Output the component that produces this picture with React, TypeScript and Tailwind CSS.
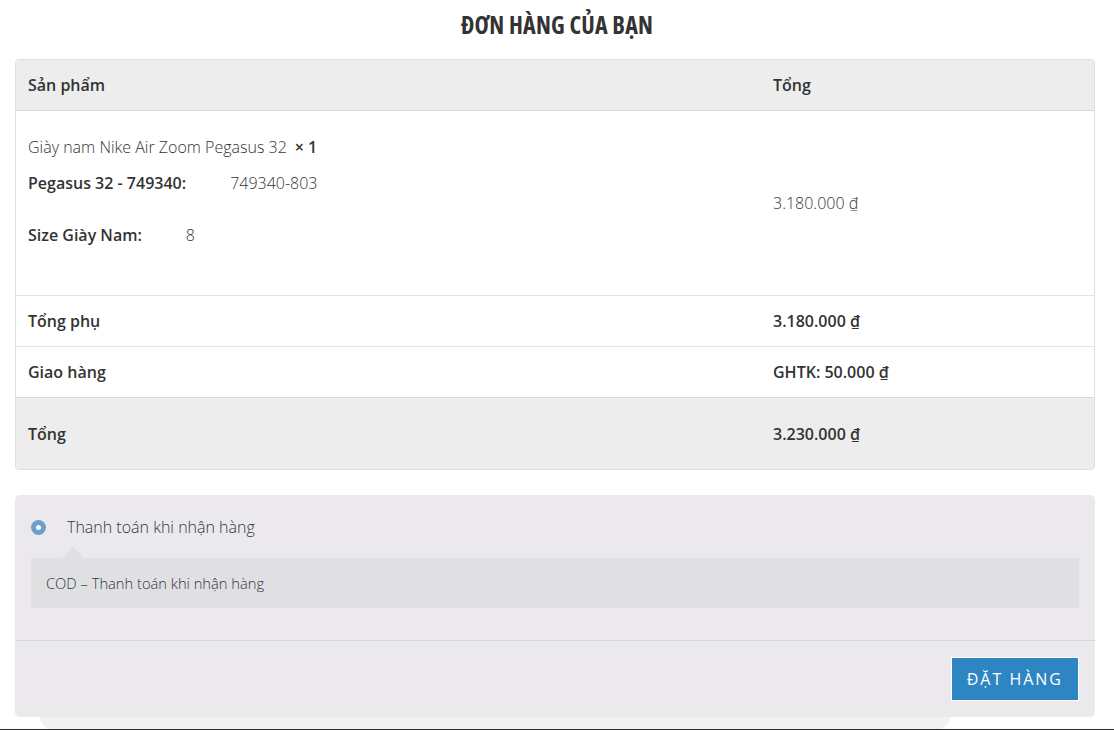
import React from 'react';

const font = { fontFamily: '"Open Sans", "Noto Sans", sans-serif' };

const totals = [
  { label: 'Tổng phụ', value: '3.180.000 ₫' },
  { label: 'Giao hàng', value: 'GHTK: 50.000 ₫' },
];

const App: React.FC = () => {
  return (
    <div className="w-[1114px] h-[730px] bg-white overflow-hidden flex flex-col text-[#333]" style={font}>
      {/* Title */}
      <div className="h-[59px] flex items-center justify-center pb-[10px]">
        <h2 className="text-[24px] font-bold font-stretch-condensed tracking-[0.2px] text-[#333]">
          ĐƠN HÀNG CỦA BẠN
        </h2>
      </div>

      {/* Order table */}
      <div className="ml-[15px] mr-[19px] border border-[#dedede] rounded-[4px] overflow-hidden">
        <div className="flex h-[51px] items-center bg-[#ededed] border-b border-[#dcdcdc] text-[16px] font-semibold">
          <div className="w-[757px] pl-[12px]">Sản phẩm</div>
          <div className="flex-1">Tổng</div>
        </div>

        <div className="flex items-center h-[184px] bg-white">
          <div className="w-[757px] pl-[12px] pt-[23px] pb-[47px] text-[16px]">
            <div className="h-[26px] flex items-center font-light text-[#333]">
              Giày nam Nike Air Zoom Pegasus 32
              <span className="ml-[8px] font-semibold text-[#333]">× 1</span>
            </div>
            <div className="h-[26px] mt-[10px] flex items-center">
              <span className="font-semibold">Pegasus 32 - 749340:</span>
              <span className="ml-[44px] font-light text-[#333]">749340-803</span>
            </div>
            <div className="h-[26px] mt-[26px] flex items-center">
              <span className="font-semibold">Size Giày Nam:</span>
              <span className="ml-[44px] font-light text-[#333]">8</span>
            </div>
          </div>
          <div className="flex-1 text-[16px] font-light text-[#333]">3.180.000 ₫</div>
        </div>

        {totals.map((row) => (
          <div key={row.label} className="flex items-center h-[51px] border-t border-[#e3e3e3] bg-white text-[16px] font-semibold">
            <div className="w-[757px] pl-[12px]">{row.label}</div>
            <div className="flex-1">{row.value}</div>
          </div>
        ))}

        <div className="flex items-center h-[72px] border-t border-[#d9d9d9] bg-[#ededed] text-[16px] font-semibold">
          <div className="w-[757px] pl-[12px]">Tổng</div>
          <div className="flex-1">3.230.000 ₫</div>
        </div>
      </div>

      {/* Payment */}
      <div className="ml-[15px] mr-[19px] mt-[25px] h-[222px] rounded-[5px] bg-[#ebe9ec] flex flex-col">
        <div className="pt-[20px] px-[16px]">
          <div className="flex items-center h-[24px]">
            <span className="w-[15px] h-[15px] rounded-full bg-[#6a9fd0] flex items-center justify-center">
              <span className="w-[5px] h-[5px] rounded-full bg-white" />
            </span>
            <span className="ml-[21px] text-[16px] font-light text-[#2f3642]">Thanh toán khi nhận hàng</span>
          </div>
          <div className="relative mt-[19px] h-[50px] bg-[#e0dfe2] flex items-center pl-[15px] text-[14.7px] font-light text-[#2f3642]">
            <span className="absolute left-[31px] -top-[11px] w-0 h-0 border-l-[11px] border-r-[11px] border-b-[11px] border-l-transparent border-r-transparent border-b-[#e0dfe2]" />
            COD – Thanh toán khi nhận hàng
          </div>
        </div>
        <div className="mt-[32px] border-t border-[#d3d6da]" />
        <div className="flex justify-end pr-[16px] pt-[16px]">
          <button className="h-[44px] px-[15px] bg-[#2d86c1] border border-white text-white text-[16px] tracking-[2px] font-normal">
            ĐẶT HÀNG
          </button>
        </div>
      </div>

      <div className="mx-[40px] w-[910px] h-[12px] bg-[#f1f1f1] rounded-b-[20px]" />
      <div className="mt-auto h-px bg-[#2b2b2b]" />
    </div>
  );
};

export default App;
